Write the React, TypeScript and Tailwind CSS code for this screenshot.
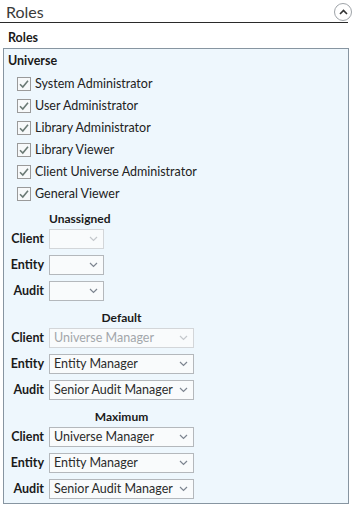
import React from 'react';

const roles = [
  'System Administrator',
  'User Administrator',
  'Library Administrator',
  'Library Viewer',
  'Client Universe Administrator',
  'General Viewer',
];

interface RoleGroup {
  title: string;
  width: string;
  rows: { label: string; value: string; disabled?: boolean }[];
}

const groups: RoleGroup[] = [
  {
    title: 'Unassigned',
    width: 'w-[55px]',
    rows: [
      { label: 'Client', value: '', disabled: true },
      { label: 'Entity', value: '' },
      { label: 'Audit', value: '' },
    ],
  },
  {
    title: 'Default',
    width: 'w-[145px]',
    rows: [
      { label: 'Client', value: 'Universe Manager', disabled: true },
      { label: 'Entity', value: 'Entity Manager' },
      { label: 'Audit', value: 'Senior Audit Manager' },
    ],
  },
  {
    title: 'Maximum',
    width: 'w-[145px]',
    rows: [
      { label: 'Client', value: 'Universe Manager' },
      { label: 'Entity', value: 'Entity Manager' },
      { label: 'Audit', value: 'Senior Audit Manager' },
    ],
  },
];

const Check = () => (
  <span className="w-[14px] h-[14px] border border-[#9a9a9a] bg-[#f7f9fa] flex items-center justify-center">
    <svg width="12" height="12" viewBox="0 0 12 12">
      <path d="M2 6.2 L4.8 9 L10 2.8" fill="none" stroke="#6b7a75" strokeWidth="1.6" />
    </svg>
  </span>
);

const Chevron = ({ disabled }: { disabled?: boolean }) => (
  <svg width="9" height="6" viewBox="0 0 9 6" className="shrink-0">
    <path d="M1 1 L4.5 4.5 L8 1" fill="none" stroke={disabled ? '#c4c8cc' : '#7d8590'} strokeWidth="1.2" />
  </svg>
);

const Dropdown = ({ value, disabled, width }: { value: string; disabled?: boolean; width: string }) => (
  <div
    className={`${width} h-[20px] flex items-center justify-between pl-[4px] pr-[5px] border bg-[#f9fbfc] ${
      disabled ? 'border-[#d3d6d9] text-[#a3a7ab]' : 'border-[#b4b8bc] text-[#2b2b2b]'
    }`}
  >
    <span className="text-[12.5px] leading-none whitespace-nowrap">{value}</span>
    <Chevron disabled={disabled} />
  </div>
);

export default function App() {
  return (
    <div className="w-[353px] h-[507px] bg-white text-[#1a1a1a] font-['Lato','Open_Sans',sans-serif]">
      <div className="w-[348px] h-[23px] flex items-center justify-between pl-[6px] border-b border-[#2a2a2a]">
        <span className="text-[16px] text-[#3a3a3a] leading-none mt-[2px]">Roles</span>
        <span className="w-[18px] h-[18px] mr-[-4px] mt-[2px] rounded-full border border-[#9ea3a8] flex items-center justify-center">
          <svg width="9" height="6" viewBox="0 0 9 6">
            <path d="M1 5 L4.5 1.5 L8 5" fill="none" stroke="#333" strokeWidth="1.6" />
          </svg>
        </span>
      </div>
      <div className="pl-[8px] pt-[9px] h-[25px] text-[12.5px] font-bold leading-none">Roles</div>
      <div className="ml-[3px] w-[346px] h-[456px] border border-[#8795a1] bg-[#eef7fd] pl-[4px] pt-[4px]">
        <div className="text-[12.5px] font-bold h-[16px] leading-[16px]">Universe</div>
        <div className="mt-[4px] pl-[9px] flex flex-col">
          {roles.map((r) => (
            <div key={r} className="h-[22px] flex items-center gap-[4px]">
              <Check />
              <span className="text-[12.5px] text-[#222]">{r}</span>
            </div>
          ))}
        </div>
        {groups.map((g, gi) => (
          <div
            key={g.title}
            className={`grid grid-cols-[36px_auto] gap-x-[5px] gap-y-[6px] ${gi === 0 ? 'mt-[6px]' : 'mt-[9px]'}`}
          >
            <div />
            <div className={`${g.width} text-center text-[12px] font-bold h-[16px] leading-[16px] mb-[-4px]`}>
              {g.title}
            </div>
            {g.rows.map((row) => (
              <React.Fragment key={row.label}>
                <div className="text-right text-[12.5px] font-bold leading-[20px] h-[20px] whitespace-nowrap">
                  {row.label}
                </div>
                <Dropdown value={row.value} disabled={row.disabled} width={g.width} />
              </React.Fragment>
            ))}
          </div>
        ))}
      </div>
    </div>
  );
}
